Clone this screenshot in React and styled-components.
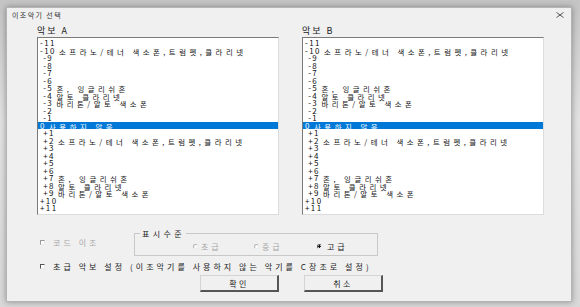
import React from "react";
import styled, { createGlobalStyle } from "styled-components";

const GlobalStyle = createGlobalStyle`
  html, body {
    margin: 0;
    padding: 0;
    background: #cfcfcf;
  }
  body {
    font-family: "Noto Sans CJK KR", "Noto Sans", sans-serif;
  }
`;

const Screen = styled.div`
  width: 580px;
  height: 307px;
  box-sizing: border-box;
  padding: 7px 8px 5px 6px;
  background: linear-gradient(180deg, #c4c4c4 0%, #e2e2e2 40%, #d8d8d8 100%);
  overflow: hidden;
`;

const Dialog = styled.div`
  height: 100%;
  box-sizing: border-box;
  background: #f0f0f0;
  border: 1px solid #b4b4b4;
  box-shadow: 0 0 6px rgba(0, 0, 0, 0.35);
  display: flex;
  flex-direction: column;
`;

const TitleBar = styled.div`
  height: 14px;
  display: flex;
  align-items: center;
  justify-content: space-between;
  padding: 0 7px 0 5px;
`;

const Title = styled.span`
  font-size: 7px;
  letter-spacing: 1.4px;
  color: #333;
`;

const Close = styled.svg`
  width: 8px;
  height: 6px;
`;

const Body = styled.div`
  display: flex;
  flex-direction: column;
  padding: 4px 0 0 30px;
`;

const Columns = styled.div`
  display: flex;
  gap: 23px;
`;

const Column = styled.div`
  display: flex;
  flex-direction: column;
  width: 242px;
`;

const Label = styled.div`
  font-size: 9px;
  letter-spacing: 2px;
  color: #222;
  height: 9px;
  line-height: 9px;
  margin-bottom: 2px;
`;

const List = styled.div`
  height: 178px;
  box-sizing: border-box;
  background: #fff;
  border-top: 1px solid #7a7a7a;
  border-left: 1px solid #7a7a7a;
  border-right: 1px solid #dcdcdc;
  border-bottom: 1px solid #dcdcdc;
  padding-top: 1px;
  overflow: hidden;
`;

const Item = styled.div`
  height: 7.5px;
  line-height: 7.5px;
  font-size: 8px;
  white-space: pre;
  padding-left: 2px;
  color: ${(p) => (p.$selected ? "#fff" : "#111")};
  background: ${(p) => (p.$selected ? "#0078d7" : "transparent")};
`;

const Num = styled.span`
  letter-spacing: 1.4px;
`;

const Name = styled.span`
  font-size: 7.4px;
  letter-spacing: 3.5px;
  vertical-align: -0.6px;
`;

const Options = styled.div`
  display: flex;
  align-items: center;
  margin-top: 14px;
  height: 27px;
`;

const Check = styled.label`
  display: flex;
  align-items: center;
  gap: 8px;
  font-size: 8px;
  letter-spacing: 3.05px;
  color: ${(p) => (p.$disabled ? "#a8a8a8" : "#222")};
  width: ${(p) => p.$width || "auto"};
  line-height: 9px;
  white-space: nowrap;
`;

const Box = styled.span`
  width: 5px;
  height: 5px;
  box-sizing: border-box;
  border-top: 1px solid ${(p) => (p.$disabled ? "#9a9a9a" : "#555")};
  border-left: 1px solid ${(p) => (p.$disabled ? "#9a9a9a" : "#555")};
  border-right: 1px solid #e8e8e8;
  border-bottom: 1px solid #e8e8e8;
  background: #fff;
  flex: none;
`;

const Group = styled.fieldset`
  margin: 0;
  padding: 0 0 0 58px;
  width: 244px;
  height: 27px;
  box-sizing: border-box;
  border: 1px solid #c8c8c8;
  display: flex;
  align-items: center;
`;

const Legend = styled.legend`
  font-size: 8px;
  letter-spacing: 3.4px;
  color: #222;
  padding: 0 1px 0 2px;
  margin-left: -53px;
  line-height: 9px;
`;

const Radio = styled.label`
  display: flex;
  align-items: center;
  gap: ${(p) => (p.$checked ? "5px" : "3px")};
  width: ${(p) => p.$width || "auto"};
  font-size: 8px;
  letter-spacing: 2.9px;
  line-height: 9px;
  margin-top: -1px;
  color: ${(p) => (p.$disabled ? "#a8a8a8" : "#222")};
`;

const Dot = styled.span`
  width: 5px;
  height: 5px;
  box-sizing: border-box;
  border-radius: 50%;
  border: 1px solid ${(p) => (p.$disabled ? "#b4b4b4" : "#555")};
  border-right-color: #ececec;
  border-bottom-color: #ececec;
  background: ${(p) =>
    p.$checked ? "radial-gradient(circle, #111 0 1.2px, #fff 1.4px)" : "#fff"};
  flex: none;
`;

const Note = styled.div`
  margin-top: 6px;
  margin-left: 3px;
`;

const Buttons = styled.div`
  display: flex;
  gap: 25px;
  margin: 4px 0 0 163px;
`;

const Button = styled.button`
  width: 79px;
  height: 17px;
  padding: 0;
  background: #f0f0f0;
  border-top: 1px solid #d4d4d4;
  border-left: 1px solid #d4d4d4;
  border-right: 2px solid #555;
  border-bottom: 2px solid #555;
  font-family: "Noto Sans CJK KR", sans-serif;
  font-size: 8px;
  letter-spacing: 2.5px;
  color: #222;
`;

const items = [
  ["-11", ""],
  ["-10", "소프라노/테너 색소폰,트럼펫,클라리넷"],
  [" -9", ""],
  [" -8", ""],
  [" -7", ""],
  [" -6", ""],
  [" -5", "혼, 잉글리쉬혼"],
  [" -4", "알토 클라리넷"],
  [" -3", "바리톤/알토 색소폰"],
  [" -2", ""],
  [" -1", ""],
  ["0", "사용하지 않음"],
  [" +1", ""],
  [" +2", "소프라노/테너 색소폰,트럼펫,클라리넷"],
  [" +3", ""],
  [" +4", ""],
  [" +5", ""],
  [" +6", ""],
  [" +7", "혼, 잉글리쉬혼"],
  [" +8", "알토 클라리넷"],
  [" +9", "바리톤/알토 색소폰"],
  ["+10", ""],
  ["+11", ""],
];

const ScoreList = ({ label }) => (
  <Column>
    <Label>{label}</Label>
    <List>
      {items.map(([num, name]) => (
        <Item key={num} $selected={num === "0"}>
          <Num>{name ? num + " " : num}</Num>
          {name && <Name>{name}</Name>}
        </Item>
      ))}
    </List>
  </Column>
);

const App = () => (
  <>
    <GlobalStyle />
    <Screen>
      <Dialog>
        <TitleBar>
          <Title>이조악기 선택</Title>
          <Close viewBox="0 0 8 6">
            <path
              d="M0.5 0.5 L7.5 5.5 M7.5 0.5 L0.5 5.5"
              stroke="#444"
              strokeWidth="0.9"
              fill="none"
            />
          </Close>
        </TitleBar>
        <Body>
          <Columns>
            <ScoreList label="악보 A" />
            <ScoreList label="악보 B" />
          </Columns>
          <Options>
            <Check $disabled $width="94px" style={{ marginLeft: 3 }}>
              <Box $disabled />
              코드 이조
            </Check>
            <Group>
              <Legend>표시수준</Legend>
              <Radio $disabled $width="61px">
                <Dot $disabled />
                초급
              </Radio>
              <Radio $disabled $width="63px">
                <Dot $disabled />
                중급
              </Radio>
              <Radio $checked>
                <Dot $checked />
                고급
              </Radio>
            </Group>
          </Options>
          <Note>
            <Check>
              <Box />
              초급 악보 설정 (이조악기를 사용하지 않는 악기를 C장조로 설정)
            </Check>
          </Note>
          <Buttons>
            <Button>확인</Button>
            <Button>취소</Button>
          </Buttons>
        </Body>
      </Dialog>
    </Screen>
  </>
);

export default App;
